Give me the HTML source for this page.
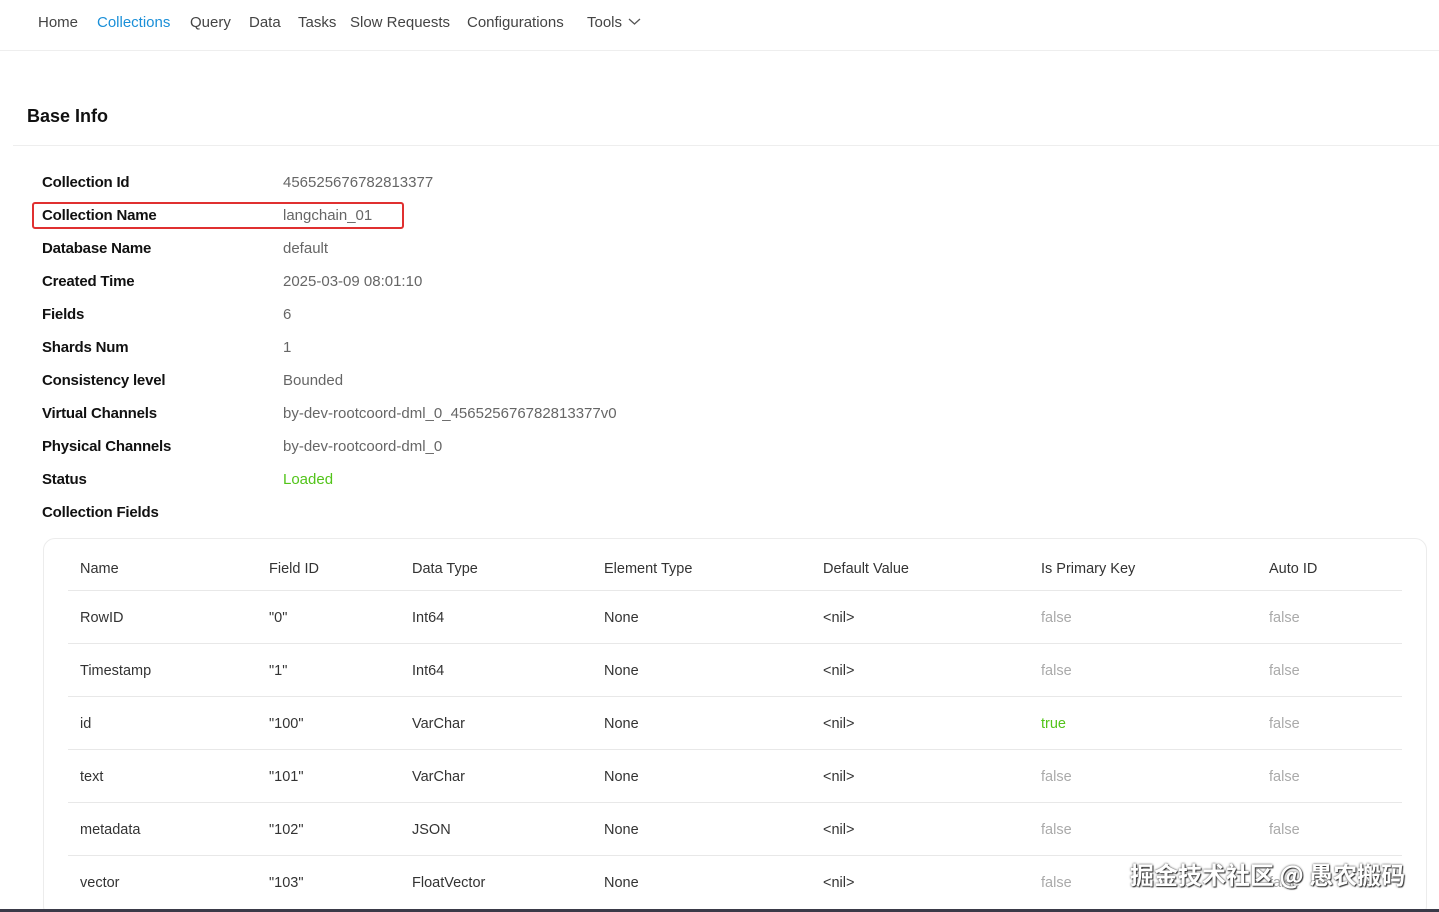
<!DOCTYPE html>
<html style="overflow:hidden;height:912px"><head><meta charset="utf-8"><style>
*{margin:0;padding:0;box-sizing:border-box}
html,body{width:1439px;height:912px;overflow:hidden}
body{background:#fff;font-family:"Liberation Sans","Noto Sans CJK SC",sans-serif;position:relative;color:#222}
.nav{position:absolute;top:0;left:0;width:1439px;height:51px;border-bottom:1px solid #eee}
.nav span{position:absolute;top:14px;font-size:15px;color:#444}
.title{position:absolute;left:27px;top:106px;font-size:18px;font-weight:bold;color:#111}
.hr{position:absolute;left:13px;top:145px;width:1426px;height:1px;background:#eee}
.lab{position:absolute;left:42px;font-size:15px;font-weight:bold;color:#111;letter-spacing:-0.2px}
.val{position:absolute;left:283px;font-size:15px;color:#666}
.box{position:absolute;left:32px;top:202px;width:372px;height:27px;border:2px solid #e03030;border-radius:3px}
.card{position:absolute;left:43px;top:538px;width:1384px;height:380px;border:1px solid #ececec;border-radius:12px}
.t{position:absolute;font-size:14.5px;color:#333}
.line{position:absolute;left:68px;width:1334px;height:1px;background:#e8e8e8}
.g{color:#aaa}.gr{color:#52c41a}
.wm{position:absolute;left:1130px;top:856px;font-size:24px;color:#fff;font-family:"Noto Sans CJK SC",sans-serif;text-shadow:0 0 2px #333,1px 1px 1px #333;font-weight:bold}
.bot{position:absolute;left:0;top:909px;width:1439px;height:3px;background:#3a3a48}
</style></head><body>
<div class="nav">
<span style="left:38px">Home</span>
<span style="left:97px;color:#1a8fd8">Collections</span>
<span style="left:190px">Query</span>
<span style="left:249px">Data</span>
<span style="left:298px">Tasks</span>
<span style="left:350px">Slow Requests</span>
<span style="left:467px">Configurations</span>
<span style="left:587px">Tools</span>
<svg style="position:absolute;left:628px;top:17px" width="13" height="10"><path d="M1 2l5.5 5 5.5-5" fill="none" stroke="#555" stroke-width="1.3"/></svg>
</div>
<div class="title">Base Info</div>
<div class="hr"></div>
<div class="box"></div>
<div class="lab" style="top:174px">Collection Id</div><div class="val" style="top:174px">456525676782813377</div>
<div class="lab" style="top:207px">Collection Name</div><div class="val" style="top:207px">langchain_01</div>
<div class="lab" style="top:240px">Database Name</div><div class="val" style="top:240px">default</div>
<div class="lab" style="top:273px">Created Time</div><div class="val" style="top:273px">2025-03-09 08:01:10</div>
<div class="lab" style="top:306px">Fields</div><div class="val" style="top:306px">6</div>
<div class="lab" style="top:339px">Shards Num</div><div class="val" style="top:339px">1</div>
<div class="lab" style="top:372px">Consistency level</div><div class="val" style="top:372px">Bounded</div>
<div class="lab" style="top:405px">Virtual Channels</div><div class="val" style="top:405px">by-dev-rootcoord-dml_0_456525676782813377v0</div>
<div class="lab" style="top:438px">Physical Channels</div><div class="val" style="top:438px">by-dev-rootcoord-dml_0</div>
<div class="lab" style="top:471px">Status</div><div class="val" style="top:471px;color:#52c41a">Loaded</div>
<div class="lab" style="top:504px">Collection Fields</div>
<div class="card"></div>
<div class="t" style="left:80px;top:561px">Name</div>
<div class="t" style="left:269px;top:561px">Field ID</div>
<div class="t" style="left:412px;top:561px">Data Type</div>
<div class="t" style="left:604px;top:561px">Element Type</div>
<div class="t" style="left:823px;top:561px">Default Value</div>
<div class="t" style="left:1041px;top:561px">Is Primary Key</div>
<div class="t" style="left:1269px;top:561px">Auto ID</div>
<div class="line" style="top:590px"></div>
<div class="t" style="left:80px;top:610px">RowID</div><div class="t" style="left:269px;top:610px">"0"</div><div class="t" style="left:412px;top:610px">Int64</div><div class="t" style="left:604px;top:610px">None</div><div class="t" style="left:823px;top:610px">&lt;nil&gt;</div><div class="t g" style="left:1041px;top:610px">false</div><div class="t g" style="left:1269px;top:610px">false</div>
<div class="line" style="top:643px"></div>
<div class="t" style="left:80px;top:663px">Timestamp</div><div class="t" style="left:269px;top:663px">"1"</div><div class="t" style="left:412px;top:663px">Int64</div><div class="t" style="left:604px;top:663px">None</div><div class="t" style="left:823px;top:663px">&lt;nil&gt;</div><div class="t g" style="left:1041px;top:663px">false</div><div class="t g" style="left:1269px;top:663px">false</div>
<div class="line" style="top:696px"></div>
<div class="t" style="left:80px;top:716px">id</div><div class="t" style="left:269px;top:716px">"100"</div><div class="t" style="left:412px;top:716px">VarChar</div><div class="t" style="left:604px;top:716px">None</div><div class="t" style="left:823px;top:716px">&lt;nil&gt;</div><div class="t gr" style="left:1041px;top:716px">true</div><div class="t g" style="left:1269px;top:716px">false</div>
<div class="line" style="top:749px"></div>
<div class="t" style="left:80px;top:769px">text</div><div class="t" style="left:269px;top:769px">"101"</div><div class="t" style="left:412px;top:769px">VarChar</div><div class="t" style="left:604px;top:769px">None</div><div class="t" style="left:823px;top:769px">&lt;nil&gt;</div><div class="t g" style="left:1041px;top:769px">false</div><div class="t g" style="left:1269px;top:769px">false</div>
<div class="line" style="top:802px"></div>
<div class="t" style="left:80px;top:822px">metadata</div><div class="t" style="left:269px;top:822px">"102"</div><div class="t" style="left:412px;top:822px">JSON</div><div class="t" style="left:604px;top:822px">None</div><div class="t" style="left:823px;top:822px">&lt;nil&gt;</div><div class="t g" style="left:1041px;top:822px">false</div><div class="t g" style="left:1269px;top:822px">false</div>
<div class="line" style="top:855px"></div>
<div class="t" style="left:80px;top:875px">vector</div><div class="t" style="left:269px;top:875px">"103"</div><div class="t" style="left:412px;top:875px">FloatVector</div><div class="t" style="left:604px;top:875px">None</div><div class="t" style="left:823px;top:875px">&lt;nil&gt;</div><div class="t g" style="left:1041px;top:875px">false</div><div class="t g" style="left:1269px;top:875px">false</div>
<div class="wm">掘金技术社区 @ 愚农搬码</div>
<div class="bot"></div>
</body></html>
